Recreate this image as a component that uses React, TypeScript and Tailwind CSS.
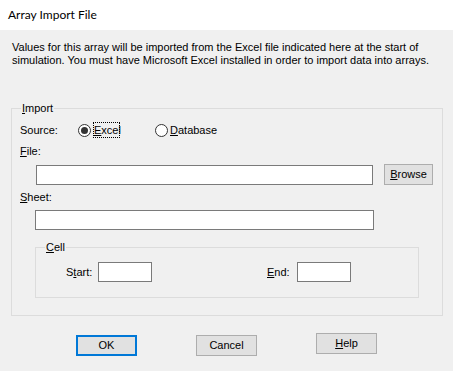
import React from 'react';

const ui = { fontFamily: '"Liberation Sans", Arial, sans-serif' };

const Radio: React.FC<{ checked?: boolean }> = ({ checked }) => (
  <span className="w-[13px] h-[13px] rounded-full border border-[#333333] bg-white flex items-center justify-center shrink-0">
    {checked && <span className="w-[7px] h-[7px] rounded-full bg-[#333333]" />}
  </span>
);

const Btn: React.FC<{ children: React.ReactNode; primary?: boolean; className?: string }> = ({
  children,
  primary,
  className = 'w-[61px]',
}) => (
  <button
    className={`h-[21px] bg-[#e1e1e1] text-[11px] leading-none text-black flex items-center justify-center ${
      primary ? 'border-2 border-[#0078d7]' : 'border border-[#adadad]'
    } ${className}`}
  >
    {children}
  </button>
);

export default function App() {
  return (
    <div className="w-[453px] h-[371px] bg-[#f0f0f0] flex flex-col text-[11px] text-black" style={ui}>
      {/* title bar */}
      <div
        className="h-[30px] bg-white flex items-center pl-[8px] text-[12px]"
        style={{ fontFamily: 'Lato, "Noto Sans", sans-serif' }}
      >
        Array Import File
      </div>

      <p className="mt-[11px] px-[12px] leading-[13px]">
        Values for this array will be imported from the Excel file indicated here at the start of
        <br />
        simulation. You must have Microsoft Excel installed in order to import data into arrays.
      </p>

      {/* Import group */}
      <div className="relative ml-[11px] mt-[41px] w-[432px] h-[208px] border border-[#dcdcdc] flex flex-col">
        <span className="absolute left-[9px] -top-[7px] leading-[13px] px-[1px] bg-[#f0f0f0]">
          <u>I</u>mport
        </span>

        <div className="mt-[13px] h-[16px] pl-[8px] flex items-center">
          <span className="w-[58px]">Source:</span>
          <Radio checked />
          <span className="ml-[2px] w-[27px] h-[16px] border border-dotted border-black flex items-center">
            <u>E</u>xcel
          </span>
          <span className="ml-[35px]">
            <Radio />
          </span>
          <span className="ml-[2px]">
            <u>D</u>atabase
          </span>
        </div>

        <div className="mt-[7px] h-[13px] leading-[13px] pl-[8px]">
          <u>F</u>ile:
        </div>
        <div className="mt-[6px] flex items-start">
          <input className="ml-[24px] mt-[1px] w-[337px] h-[20px] bg-white border border-[#7a7a7a] outline-none" />
          <Btn className="ml-[11px] w-[49px]">
            <u>B</u>rowse
          </Btn>
        </div>

        <div className="mt-[6px] h-[13px] leading-[13px] pl-[8px]">
          <u>S</u>heet:
        </div>
        <input className="ml-[23px] mt-[6px] w-[339px] h-[20px] bg-white border border-[#7a7a7a] outline-none" />

        {/* Cell group */}
        <div className="relative ml-[23px] mt-[17px] w-[384px] h-[51px] border border-[#dcdcdc] flex flex-col">
          <span className="absolute left-[9px] -top-[7px] leading-[13px] px-[1px] bg-[#f0f0f0]">
            <u>C</u>ell
          </span>
          <div className="mt-[14px] pl-[30px] flex items-center">
            <span className="w-[32px]">
              S<u>t</u>art:
            </span>
            <input className="w-[54px] h-[20px] bg-white border border-[#7a7a7a] outline-none" />
            <span className="ml-[115px] w-[30px]">
              <u>E</u>nd:
            </span>
            <input className="w-[54px] h-[20px] bg-white border border-[#7a7a7a] outline-none" />
          </div>
        </div>
      </div>

      {/* buttons */}
      <div className="mt-[17px] pl-[76px] flex items-start gap-[59px]">
        <Btn primary className="w-[61px] mt-[2px]">
          OK
        </Btn>
        <Btn className="w-[61px] mt-[2px]">Cancel</Btn>
        <Btn className="w-[61px]">
          <u>H</u>elp
        </Btn>
      </div>
    </div>
  );
}
